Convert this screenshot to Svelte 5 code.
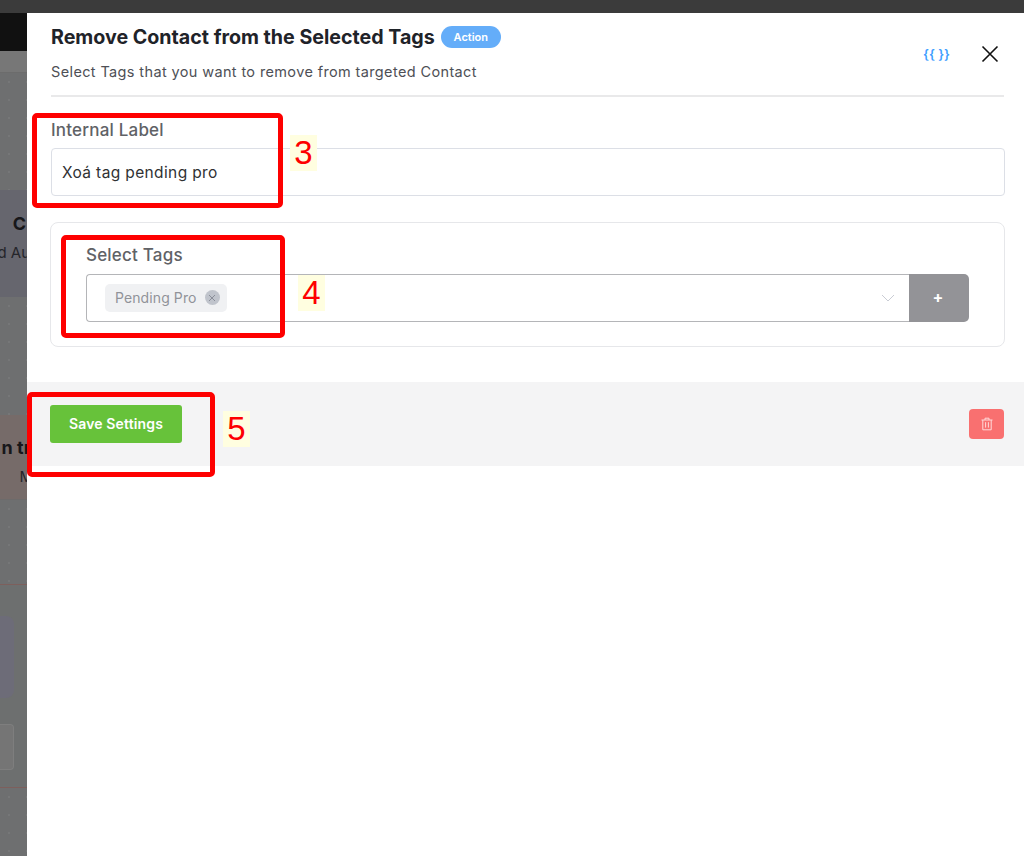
<script>
  let label = "Xoá tag pending pro";
</script>

<div class="page">
  <div class="topbar"></div>
  <div class="body">
    <div class="backdrop">
      <div class="nav"></div>
      <div class="subnav"></div>
      <div class="canvas c1"></div>
      <div class="node n1">
        <span class="nodeTitle">C</span>
        <span class="nodeSub">d Au</span>
      </div>
      <div class="canvas c2"></div>
      <div class="node n2">
        <span class="nodeTitle">n tr</span>
        <span class="nodeSub">M</span>
      </div>
      <div class="canvas c3"></div>
      <div class="purple"></div>
      <div class="ghost"></div>
      <div class="canvas c4"></div>
    </div>

    <div class="drawer">
      <header>
        <div class="headText">
          <div class="titleRow">
            <h1>Remove Contact from the Selected Tags</h1>
            <span class="badge">Action</span>
          </div>
          <p>Select Tags that you want to remove from targeted Contact</p>
        </div>
        <div class="headActions">
          <span class="braces">{"{{ }}"}</span>
          <svg class="close" width="18" height="18" viewBox="0 0 18 18">
            <path d="M1.5 1.5L16.5 16.5M16.5 1.5L1.5 16.5" stroke="#111" stroke-width="1.6" fill="none" />
          </svg>
        </div>
      </header>

      <div class="fields">
        <label for="internal">Internal Label</label>
        <input id="internal" type="text" value={label} />

        <div class="card">
          <div class="cardLabel">Select Tags</div>
          <div class="selectRow">
            <div class="select">
              <span class="tag">
                Pending Pro
                <span class="tagClose">
                  <svg width="8" height="8" viewBox="0 0 8 8">
                    <path d="M1 1L7 7M7 1L1 7" stroke="#8a8e99" stroke-width="1" fill="none" />
                  </svg>
                </span>
              </span>
              <svg class="chevron" width="14" height="8" viewBox="0 0 14 8">
                <path d="M1 1L7 7L13 1" stroke="#c9ccd4" stroke-width="1" fill="none" />
              </svg>
            </div>
            <button class="plus">+</button>
          </div>
        </div>
      </div>

      <footer>
        <button class="save">Save Settings</button>
        <button class="trash" aria-label="Delete">
          <svg width="14" height="14" viewBox="0 0 14 14" fill="none" stroke="#ffd9d9" stroke-width="1">
            <path d="M1.5 3H12.5M5 3V1.2H9V3M2.8 3V12.8H11.2V3M5.6 5.2V10.6M8.4 5.2V10.6" />
          </svg>
        </button>
      </footer>
    </div>
  </div>

  <div class="mark m3"></div>
  <div class="mark m4"></div>
  <div class="mark m5"></div>
  <span class="num s3">3</span>
  <span class="num s4">4</span>
  <span class="num s5">5</span>
</div>

<style>
  :global(body) {
    margin: 0;
  }

  .page {
    position: relative;
    width: 1024px;
    height: 856px;
    overflow: hidden;
    font-family: Inter, "Liberation Sans", sans-serif;
    background: #fff;
  }

  .topbar {
    height: 13px;
    background: #3b3b3b;
  }

  .body {
    display: flex;
    height: 843px;
  }

  .backdrop {
    width: 27px;
    flex: none;
    display: flex;
    flex-direction: column;
    overflow: hidden;
    background: #6d6f6f;
  }

  .nav {
    height: 38px;
    background: #111;
  }

  .subnav {
    height: 21px;
    background: #777;
    border-bottom: 1px solid #6c6c6c;
  }

  .canvas {
    background-color: #6e6f70;
    background-image: radial-gradient(#767778 1px, transparent 1px);
    background-size: 18px 18px;
  }

  .c1 {
    height: 117px;
  }

  .node {
    display: flex;
    flex-direction: column;
    align-items: flex-end;
    white-space: nowrap;
    color: #17171a;
  }

  .n1 {
    height: 107px;
    background: #66666e;
    box-sizing: border-box;
    padding-top: 23px;
  }

  .n2 {
    height: 85px;
    background: #766b69;
    box-sizing: border-box;
    padding-top: 22px;
    border-bottom: 1px solid #6d6b6b;
  }

  .nodeTitle {
    font-size: 18px;
    font-weight: 700;
    line-height: 22px;
  }

  .nodeSub {
    margin-top: 7px;
    font-size: 15px;
    line-height: 22px;
    color: #25252a;
  }

  .n1 .nodeTitle {
    margin-right: 1px;
  }

  .n1 .nodeSub {
    margin-right: -3px;
  }

  .n2 .nodeTitle {
    margin-right: -4px;
  }

  .n2 .nodeSub {
    margin-right: -6px;
  }

  .c2 {
    height: 118px;
  }

  .c3 {
    height: 84px;
    border-bottom: 1px solid #7d5f5c;
    margin-bottom: 31px;
  }

  .purple {
    width: 14px;
    height: 82px;
    flex: none;
    background: #6d6c78;
    border-radius: 0 8px 8px 0;
    margin-bottom: 26px;
  }

  .ghost {
    width: 14px;
    height: 46px;
    flex: none;
    box-sizing: border-box;
    background: #757575;
    border: 1px solid #7e7e7e;
    border-left: 0;
    border-radius: 0 4px 4px 0;
    margin-bottom: 17px;
  }

  .c4 {
    flex: 1;
    border-top: 1px solid #7d5f5c;
  }

  .drawer {
    flex: 1;
    min-width: 0;
    color: #606266;
  }

  header {
    display: flex;
    justify-content: space-between;
    box-sizing: border-box;
    height: 84px;
    margin: 0 20px 0 24px;
    border-bottom: 2px solid #e9e9ea;
  }

  .titleRow {
    display: flex;
    align-items: center;
    gap: 6px;
    margin-top: 13px;
  }

  h1 {
    margin: 0;
    font-size: 19.65px;
    line-height: 22px;
    font-weight: 700;
    color: #1f2329;
  }

  .badge {
    width: 60px;
    height: 22px;
    line-height: 22px;
    text-align: center;
    border-radius: 11px;
    background: #64adf9;
    color: #fff;
    font-size: 11px;
    font-weight: 600;
  }

  header p {
    margin: 14px 0 0;
    font-size: 14.5px;
    letter-spacing: 0.37px;
    line-height: 20px;
    color: #4e5056;
  }

  .headActions {
    display: flex;
    align-items: center;
    gap: 31px;
    height: 82px;
    margin-right: 5px;
  }

  .braces {
    color: #409eff;
    font-size: 13px;
    font-weight: 600;
  }

  .fields {
    display: flex;
    flex-direction: column;
    padding: 22px 19px 0 24px;
  }

  label,
  .cardLabel {
    font-size: 17px;
    letter-spacing: 0.2px;
    line-height: 22px;
    font-weight: 500;
    color: #606266;
  }

  input {
    box-sizing: border-box;
    height: 48px;
    margin-top: 7px;
    padding: 1px 10px 0;
    border: 1px solid #dcdfe6;
    border-radius: 4px;
    font: 400 15.5px Inter, "Liberation Sans", sans-serif;
    letter-spacing: 0.37px;
    color: #303133;
    outline: none;
  }

  .card {
    box-sizing: border-box;
    height: 125px;
    margin: 26px 0 0 -1px;
    padding: 21px 35px 0;
    border: 1px solid #e6e7ea;
    border-radius: 8px;
  }

  .selectRow {
    display: flex;
    height: 48px;
    margin-top: 8px;
  }

  .select {
    flex: 1;
    display: flex;
    align-items: center;
    justify-content: space-between;
    box-sizing: border-box;
    padding: 0 14px 0 18px;
    border: 1px solid #b4b5b8;
    border-right: 0;
    border-radius: 4px 0 0 4px;
  }

  .tag {
    display: inline-flex;
    align-items: center;
    gap: 8px;
    height: 28px;
    padding: 0 7px 1px 10px;
    box-sizing: border-box;
    border-radius: 5px;
    background: #f0f1f3;
    color: #909399;
    font-size: 14px;
    letter-spacing: 0.1px;
  }

  .tagClose {
    display: flex;
    align-items: center;
    justify-content: center;
    width: 15px;
    height: 15px;
    border-radius: 50%;
    background: #c0c4cc;
  }

  .plus {
    width: 60px;
    padding: 0 2px 2px 0;
    border: 0;
    border-radius: 0 5px 5px 0;
    background: #939397;
    color: #fff;
    font: 700 16px Inter, "Liberation Sans", sans-serif;
  }

  footer {
    display: flex;
    align-items: center;
    justify-content: space-between;
    box-sizing: border-box;
    height: 84px;
    margin-top: 35px;
    padding: 0 20px 0 23px;
    background: #f4f4f5;
  }

  .save {
    width: 132px;
    height: 38px;
    padding: 0 0 2px;
    border: 0;
    border-radius: 3px;
    background: #67c23a;
    color: #fff;
    font: 600 14px Inter, "Liberation Sans", sans-serif;
    letter-spacing: 0.15px;
  }

  .trash {
    display: flex;
    align-items: center;
    justify-content: center;
    width: 35px;
    height: 30px;
    padding: 0;
    border: 0;
    border-radius: 4px;
    background: #f97070;
  }

  /* red callouts drawn over the screenshot */
  .mark {
    position: absolute;
    box-sizing: border-box;
    border: 5px solid #fe0000;
    border-radius: 5px;
  }

  .m3 {
    left: 32px;
    top: 113px;
    width: 251px;
    height: 95px;
  }

  .m4 {
    left: 61px;
    top: 235px;
    width: 224px;
    height: 103px;
  }

  .m5 {
    left: 27px;
    top: 392px;
    width: 188px;
    height: 85px;
  }

  .num {
    position: absolute;
    width: 27px;
    height: 36px;
    line-height: 36px;
    text-align: center;
    font-family: "Liberation Sans", sans-serif;
    font-size: 33px;
    color: #fe0000;
    background: #fffee0;
  }

  .s3 {
    left: 290px;
    top: 135px;
  }

  .s4 {
    left: 298px;
    top: 275px;
  }

  .s5 {
    left: 223px;
    top: 411px;
  }
</style>
